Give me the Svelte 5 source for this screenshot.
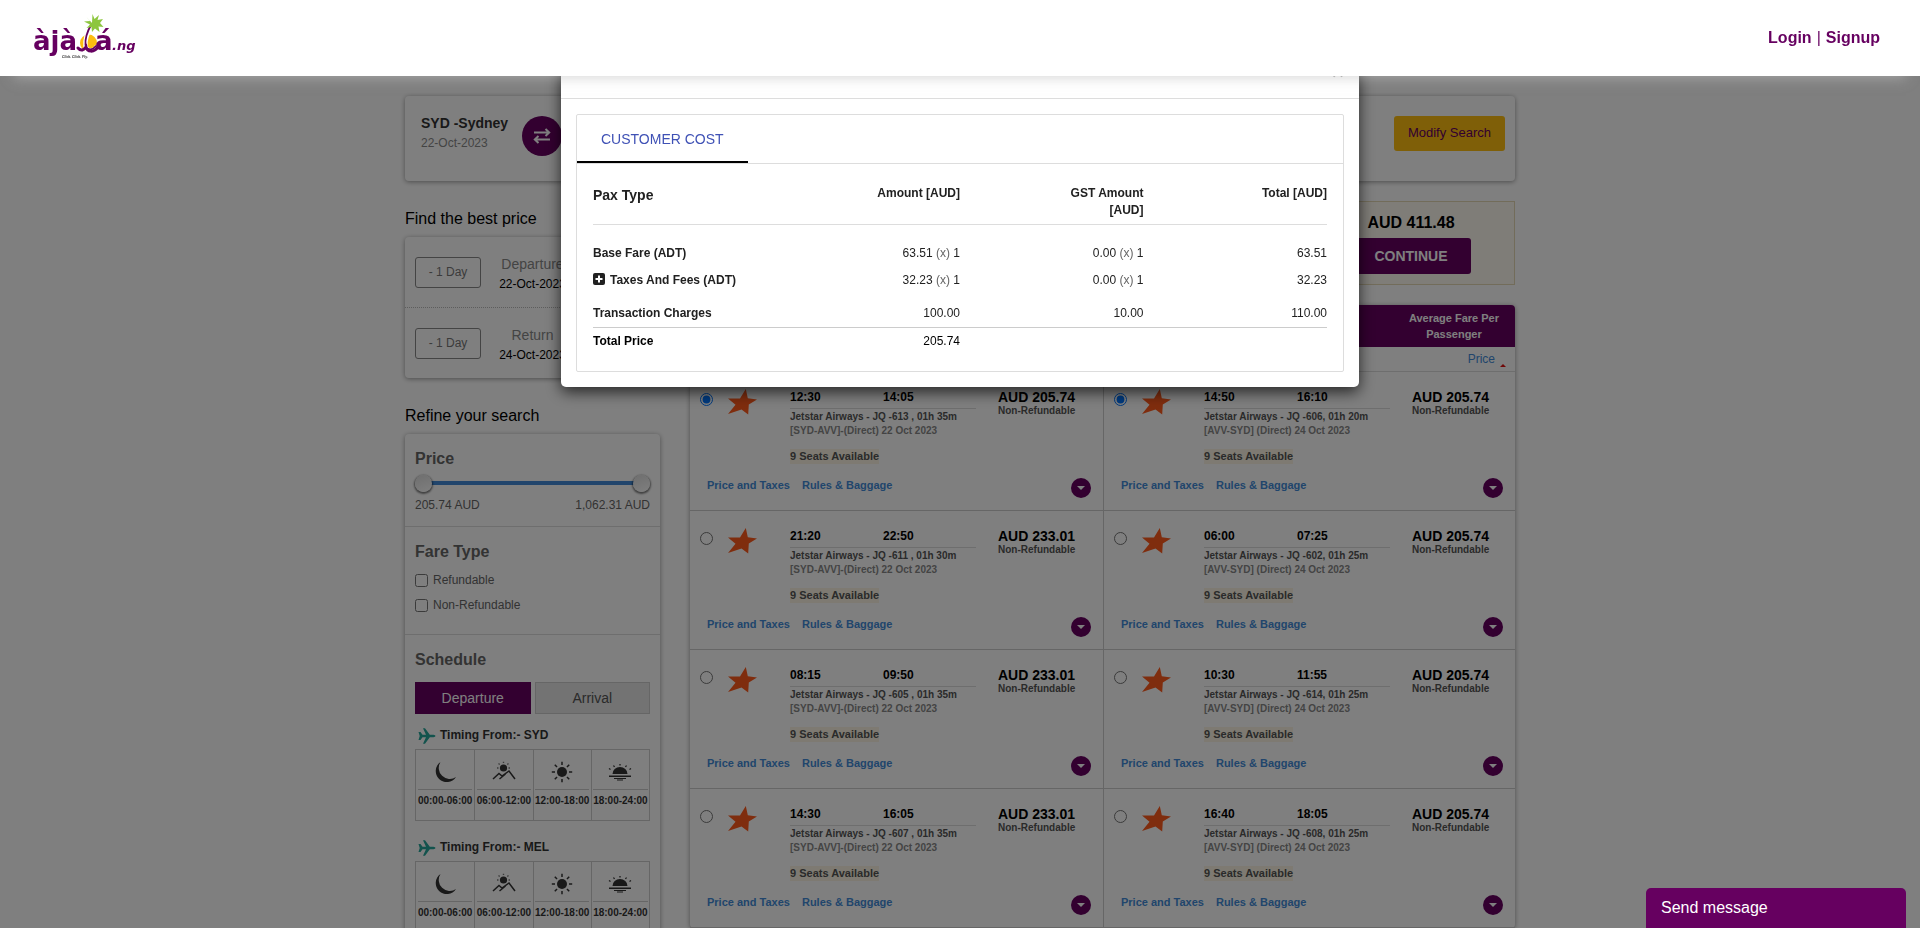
<script>
  const out = [
    { dep: '12:30', arr: '14:05', flight: 'JQ -613 , 01h 35m', price: '205.74' },
    { dep: '21:20', arr: '22:50', flight: 'JQ -611 , 01h 30m', price: '233.01' },
    { dep: '08:15', arr: '09:50', flight: 'JQ -605 , 01h 35m', price: '233.01' },
    { dep: '14:30', arr: '16:05', flight: 'JQ -607 , 01h 35m', price: '233.01' }
  ];
  const back = [
    { dep: '14:50', arr: '16:10', flight: 'JQ -606, 01h 20m', price: '205.74' },
    { dep: '06:00', arr: '07:25', flight: 'JQ -602, 01h 25m', price: '205.74' },
    { dep: '10:30', arr: '11:55', flight: 'JQ -614, 01h 25m', price: '205.74' },
    { dep: '16:40', arr: '18:05', flight: 'JQ -608, 01h 25m', price: '205.74' }
  ];
  const legs = [
    { id: 'outbound', route: '[SYD-AVV]-(Direct) 22 Oct 2023', flights: out },
    { id: 'inbound', route: '[AVV-SYD] (Direct) 24 Oct 2023', flights: back }
  ];
  const shifts = [
    { label: 'Departure', date: '22-Oct-2023' },
    { label: 'Return', date: '24-Oct-2023' }
  ];
  const slots = ['00:00-06:00', '06:00-12:00', '12:00-18:00', '18:00-24:00'];
  const rays = [0, 45, 90, 135, 180, 225, 270, 315];
  let chosen = $state({ outbound: 0, inbound: 0 });
  let tab = $state('Departure');
  let low = $state(205.74);
  let high = $state(1062.31);
</script>

<header class="top">
  <a class="logo" href="#home" aria-label="ajala.ng">
    <svg width="110" height="56" viewBox="0 0 110 56">
      <circle cx="56.500" cy="33" r="8.500" fill="#fdbd10" />
      <path d="M59 17C54.500 24 53 31 53.500 36C54 42 62 42 65 36" fill="none" stroke="#fff" stroke-width="4.500" />
      <path d="M59.500 14C55 22 53 30 53.500 35C54 40 60 41 64 36" fill="none" stroke="#660060" stroke-width="1.800" stroke-linecap="round" />
      <path d="M46 38C49 41.500 52 40 54 37C55 42 62 43 66 37" fill="none" stroke="#660060" stroke-width="3" stroke-linecap="round" />
      <path d="M60 13L60.500 4L62.500 9L67 5L65.500 10L71 9L68 13L71.500 17L66.500 16.500L67.500 22L63 18.500L60 22L59.500 17L54.500 18L58 14.500L52 11.500L58 11L54 6.500Z" fill="#8dc63f" />
      <text x="1" y="40" class="mark">àjà</text>
      <text x="63" y="40" class="mark">á</text>
      <text x="80" y="40" class="suffix">.ng</text>
      <text x="30" y="48" class="tagline">Click. Click. Fly.</text>
    </svg>
  </a>
  <nav class="account"><a href="#login">Login</a><span>|</span><a href="#signup">Signup</a></nav>
</header>

<main class="page">
  <section class="card search">
    <div class="from">
      <strong>SYD -Sydney</strong>
      <span>22-Oct-2023</span>
    </div>
    <button class="swap" aria-label="Swap">
      <svg width="18" height="16" viewBox="0 0 18 16" fill="none" stroke="#fff" stroke-width="2">
        <path d="M1 4.500H16M12.500 1L16.200 4.500L12.500 8M17 11.500H2M5.500 8L1.800 11.500L5.500 15" />
      </svg>
    </button>
    <button class="modify">Modify Search</button>
  </section>

  <div class="columns">
    <aside>
      <h2>Find the best price</h2>
      <div class="card">
        {#each shifts as s}
          <div class="shift">
            <button>- 1 Day</button>
            <div><span>{s.label}</span>{s.date}</div>
          </div>
        {/each}
      </div>

      <h2 class="second">Refine your search</h2>
      <div class="card">
        <section class="filter">
          <h3>Price</h3>
          <div class="range">
            <div class="track"></div>
            <input type="range" aria-label="Lowest price" min="205.74" max="1062.31" step="0.01" bind:value={low} />
            <input type="range" aria-label="Highest price" min="205.74" max="1062.31" step="0.01" bind:value={high} />
          </div>
          <div class="limits"><span>205.74 AUD</span><span>1,062.31 AUD</span></div>
        </section>
        <section class="filter fare">
          <h3>Fare Type</h3>
          <label><input type="checkbox" />Refundable</label>
          <label><input type="checkbox" />Non-Refundable</label>
        </section>
        <section class="filter schedule">
          <h3>Schedule</h3>
          <div class="tabs">
            {#each ['Departure', 'Arrival'] as t}
              <button class:on={tab === t} onclick={() => (tab = t)}>{t}</button>
            {/each}
          </div>
          {#each ['SYD', 'MEL'] as city}
            <h4>
              <svg width="18" height="16" viewBox="0 0 18 16">
                <path d="M.5 4H2.500L4.500 6.800H8L5 .3H7L11.800 6.800H15.500Q17.500 7 17.500 8Q17.500 9 15.500 9.200H11.800L7 15.700H5L8 9.200H4.500L2.500 12H.5L1.700 8Z" fill="#26a69a" />
              </svg>
              Timing From:- {city}
            </h4>
            <div class="slots">
              {#each slots as slot, i}
                <button>
                  <svg width="24" height="24" viewBox="0 0 24 24" fill="#333" stroke="none">
                    {#if i === 0}
                      <path d="M7.500 2A11 11 0 1 0 23 17A11 11 0 0 1 7.500 2Z" />
                    {:else if i === 1}
                      <circle cx="11.500" cy="8" r="3.600" />
                      <g stroke="#777" stroke-width="1.400">
                        <path d="M5 8H6.500M16.500 8H18M6.500 3.500L7.700 4.500M16.500 3.500L15.300 4.500M11.500 1.800V3" />
                      </g>
                      <path d="M1 19L7 13.500L10 16L17 11L23 19M7.500 19L13.500 14" fill="none" stroke="#333" stroke-width="1.500" />
                    {:else if i === 2}
                      <circle cx="12" cy="12" r="5" />
                      {#each rays as r}
                        <path d="M12 1.800V5" stroke="#333" stroke-width="1.500" transform="rotate({r} 12 12)" />
                      {/each}
                    {:else}
                      <path d="M4.500 14A7.500 7 0 0 1 19.500 14ZM1 15.500H23V17H1ZM6 18H18V19H6ZM9 19.500H15V20.500H9Z" />
                      <path d="M1 8.500L2.500 9.500M5.500 5.500L6.500 7M12 4V5.500M18.500 5.500L17.500 7M23 8.500L21.500 9.500" stroke="#333" stroke-width="1.300" />
                    {/if}
                  </svg>
                  <span>{slot}</span>
                </button>
              {/each}
            </div>
          {/each}
        </section>
      </div>
    </aside>

    <div class="results">
      <section class="total">
        <div>
          <strong>AUD 411.48</strong>
          <button>CONTINUE</button>
        </div>
      </section>

      <section class="card list">
        <div class="bar"><span>Average Fare Per<br />Passenger</span></div>
        <div class="sort"><a href="#price">Price</a><i></i></div>
        <div class="legs">
          {#each legs as leg}
            <div class="leg">
              {#each leg.flights as f, i}
                <article>
                  <input type="radio" name={leg.id} value={i} bind:group={chosen[leg.id]} aria-label="{f.dep} to {f.arr}" />
                  <svg class="star" width="29" height="26" viewBox="0 0 29 26">
                    <path d="M17.800 0L19.800 9.300L29 10.500L20.800 15.500L20.200 25.500L13.500 20.500L0 25L7.500 15.800L0 9.500L12 9.500Z" fill="#ff5a1c" />
                  </svg>
                  <div class="info">
                    <div class="times"><b>{f.dep}</b><b>{f.arr}</b></div>
                    <p>Jetstar Airways - {f.flight}</p>
                    <p class="route">{leg.route}</p>
                    <mark>9 Seats Available</mark>
                  </div>
                  <div class="fare-box"><b>AUD {f.price}</b><span>Non-Refundable</span></div>
                  <footer>
                    <a href="#taxes">Price and Taxes</a>
                    <a href="#rules">Rules &amp; Baggage</a>
                    <button aria-label="More details">
                      <svg width="8" height="4" viewBox="0 0 8 4"><path d="M0 0H8L4 4Z" fill="#fff" /></svg>
                    </button>
                  </footer>
                </article>
              {/each}
            </div>
          {/each}
        </div>
      </section>
    </div>
  </div>
</main>

<div class="backdrop">
  <div class="modal" role="dialog" aria-label="Customer cost">
    <div class="modal-head"><button aria-label="Close">×</button></div>
    <div class="modal-body">
      <div class="panel">
        <div class="panel-tabs"><button>CUSTOMER COST</button></div>
        <table>
          <thead>
            <tr><th>Pax Type</th><th>Amount [AUD]</th><th>GST Amount<br />[AUD]</th><th>Total [AUD]</th></tr>
          </thead>
          <tbody>
            <tr class="base"><th>Base Fare (ADT)</th><td>63.51 <i>(x)</i> 1</td><td>0.00 <i>(x)</i> 1</td><td>63.51</td></tr>
            <tr class="taxes">
              <th>
                <svg width="12" height="12" viewBox="0 0 12 12">
                  <rect width="12" height="12" rx="2" fill="#212121" />
                  <path d="M6 2.500V9.500M2.500 6H9.500" stroke="#fff" stroke-width="2" />
                </svg>Taxes And Fees (ADT)
              </th>
              <td>32.23 <i>(x)</i> 1</td><td>0.00 <i>(x)</i> 1</td><td>32.23</td>
            </tr>
            <tr class="charges"><th>Transaction Charges</th><td>100.00</td><td>10.00</td><td>110.00</td></tr>
            <tr class="sum"><th>Total Price</th><td>205.74</td><td></td><td></td></tr>
          </tbody>
        </table>
      </div>
    </div>
  </div>
</div>

<button class="chat">Send message</button>

<style>
  :global(body) {
    font-family: "Liberation Sans", Arial, sans-serif;
    font-size: 12px;
    overflow: hidden;
    background: #fff;
  }
  :global(#app) { height: 100vh; overflow: hidden; }
  * { box-sizing: border-box; }
  button { font: inherit; padding: 0; border: 0; background: none; cursor: pointer; }
  a { text-decoration: none; }
  h2, h3, h4, p { margin: 0; }

  .top {
    position: relative;
    z-index: 3;
    height: 76px;
    padding: 0 40px 0 32px;
    display: flex;
    align-items: center;
    justify-content: space-between;
    background: #fff;
    box-shadow: 0 16px 12px -14px rgba(190, 190, 190, 0.6);
  }
  .logo { height: 56px; }
  .mark { font: 700 26px "DejaVu Sans", sans-serif; fill: #660060; }
  .suffix { font: italic 700 13px "DejaVu Sans", sans-serif; fill: #660060; }
  .tagline { font: italic 700 4px Lato, sans-serif; fill: #333; }
  .account { display: flex; gap: 5px; font-size: 16px; line-height: 20px; color: #660060; }
  .account a { color: #660060; font-weight: bold; }

  .page { max-width: 1110px; margin: 0 auto; padding-top: 20px; }
  .card { background: #fff; border-radius: 4px; box-shadow: 0 1px 5px rgba(0, 0, 0, 0.4); }
  .search { display: flex; align-items: flex-start; height: 85px; padding: 17px 10px 0 16px; }
  .from { width: 101px; line-height: 20px; color: #888; }
  .from strong { display: block; font-size: 14px; color: #333; }
  .swap {
    display: grid;
    place-items: center;
    width: 40px;
    height: 40px;
    margin-top: 3px;
    border-radius: 50%;
    background: #660060;
  }
  .modify {
    margin: 3px 0 0 auto;
    padding: 0 14px 2px;
    height: 35px;
    border-radius: 3px;
    background: #ffbf10;
    color: #660060;
    font-size: 13px;
  }

  .columns { display: grid; grid-template-columns: 255px 1fr; gap: 30px; margin-top: 20px; }
  aside { padding-top: 5px; }
  h2 { font-size: 16px; font-weight: normal; line-height: 26px; margin-bottom: 5px; }
  .second { margin-top: 25px; }
  .shift {
    display: grid;
    grid-template-columns: 66px 1fr 66px;
    align-items: center;
    height: 70px;
    padding: 0 10px;
    text-align: center;
    line-height: 20px;
  }
  .shift + .shift { height: 71px; border-top: 1px dotted #bbb; }
  .shift > div { padding-top: 4px; }
  .shift span { display: block; font-size: 14px; color: #888; }
  .shift button { height: 31px; border: 1px solid #888; border-radius: 3px; color: #777; }

  .filter { padding: 14px 10px 13px; border-bottom: 1px solid #ddd; color: #666; }
  h3 { font-size: 16px; line-height: 22px; color: #666; }
  .range { display: grid; align-items: center; margin: 4px 0 5px; height: 18px; }
  .range > * { grid-area: 1 / 1; }
  .track { height: 4px; margin: 0 8px; background: #428bd8; }
  .range input { appearance: none; width: 100%; height: 17px; margin: 0; background: none; pointer-events: none; }
  .range input::-webkit-slider-thumb {
    appearance: none;
    width: 17px;
    height: 17px;
    border-radius: 50%;
    background: linear-gradient(160deg, #ddd, #fff);
    box-shadow: 0 1px 2px 1px rgba(0, 0, 0, 0.5);
    pointer-events: auto;
  }
  .limits { display: flex; justify-content: space-between; line-height: 16px; }
  .fare { padding-bottom: 19px; }
  .fare h3 { margin-bottom: 7px; }
  .fare label { display: flex; align-items: center; gap: 5px; line-height: 20px; }
  .fare label + label { margin-top: 5px; }
  .fare input { width: 13px; height: 13px; margin: 0; }
  .tabs { display: grid; grid-template-columns: 1fr 1fr; gap: 4px; margin: 11px 0 12px; }
  .tabs button { height: 32px; border: 1px solid #ccc; background: #e6e6e6; color: #555; font-size: 14px; }
  .tabs .on { background: #660060; border-color: #660060; color: #fff; }
  h4 { display: flex; align-items: center; gap: 4px; padding-left: 3px; font-size: 12px; line-height: 16px; color: #333; }
  h4 svg { margin-top: 2px; }
  .slots { display: grid; grid-template-columns: repeat(4, 1fr); margin: 5px 0 17px; border: 1px solid #ccc; height: 72px; }
  .slots button {
    display: flex;
    flex-direction: column;
    align-items: center;
    min-width: 0;
    padding-top: 10px;
    font-size: 10px;
    font-weight: bold;
    color: #333;
  }
  .slots button + button { border-left: 1px solid #ccc; }
  .slots span { margin-top: 5px; border-top: 1px solid #ccc; line-height: 22px; }

  .total {
    display: flex;
    justify-content: flex-end;
    height: 84px;
    padding: 10px 43px 0;
    border: 1px solid #e5d9b5;
    background: #fffaf0;
    text-align: center;
  }
  .total strong { display: block; font-size: 16px; line-height: 22px; }
  .total button {
    width: 120px;
    height: 36px;
    margin-top: 4px;
    border-radius: 3px;
    background: #660060;
    color: #fff;
    font-size: 14px;
    font-weight: bold;
  }
  .list { margin-top: 20px; }
  .bar {
    display: flex;
    justify-content: flex-end;
    padding: 5px 16px;
    border-radius: 4px 4px 0 0;
    background: #660060;
    color: #fff;
    font-size: 11px;
    font-weight: bold;
    line-height: 16px;
    text-align: center;
  }
  .sort { display: flex; justify-content: flex-end; height: 25px; padding-right: 9px; border-bottom: 1px solid #ddd; line-height: 24px; }
  .sort a { color: #428bd8; }
  .sort i { margin: 17px 0 0 5px; width: 0; height: 0; border: 3px solid transparent; border-top: 0; border-bottom-color: #e01010; }
  .legs { display: grid; grid-template-columns: 413fr 412fr; }
  .leg + .leg { border-left: 1px solid #ccc; }
  article {
    display: grid;
    grid-template-columns: 38px 62px 208px 1fr;
    align-items: start;
    padding: 17px 0;
    border-bottom: 1px solid #ccc;
  }
  article > input { width: 13px; height: 13px; margin: 4px 0 0 10px; }
  .times { display: grid; grid-template-columns: 93px 93px; width: 186px; padding-bottom: 3px; border-bottom: 1px solid #ddd; margin-bottom: 1px; font-size: 12px; line-height: 16px; }
  article p { font-size: 10px; font-weight: bold; line-height: 14px; color: #555; white-space: nowrap; }
  article .route { color: #888; margin-bottom: 11px; }
  mark { display: block; width: fit-content; background: #fcf5e4; color: #555; font-size: 11px; font-weight: bold; line-height: 15px; }
  .fare-box b { display: block; font-size: 14px; line-height: 16px; }
  .fare-box span { display: block; font-size: 10px; font-weight: bold; line-height: 12px; color: #555; }
  footer { grid-column: 1 / -1; display: flex; align-items: center; gap: 12px; height: 16px; margin-top: 13px; padding: 0 12px 0 17px; font-size: 11px; font-weight: bold; }
  footer a { color: #428bd8; }
  footer button { display: grid; place-items: center; width: 20px; height: 20px; margin: 6px 0 0 auto; border-radius: 50%; background: #660060; }

  .backdrop { position: fixed; inset: 0; z-index: 2; padding-top: 28px; background: rgba(0, 0, 0, 0.5); }
  .modal { max-width: 798px; margin: 0 auto; border-radius: 5px; background: #fff; box-shadow: 0 5px 15px rgba(0, 0, 0, 0.7); }
  .modal-head { display: flex; justify-content: flex-end; align-items: flex-end; height: 71px; padding: 0 15px 14px; border-bottom: 1px solid #ddd; }
  .modal-head button { font-size: 21px; font-weight: bold; line-height: 24px; color: #aaa; }
  .modal-body { padding: 15px; }
  .panel { border: 1px solid #ddd; border-radius: 2px; padding-bottom: 21px; }
  .panel-tabs { display: flex; height: 49px; border-bottom: 1px solid #ddd; }
  .panel-tabs button { padding: 2px 24px 0; border-bottom: 2px solid #000; color: #3f51b5; font-size: 14px; }
  table { width: calc(100% - 32px); margin: 0 16px; border-spacing: 0; table-layout: fixed; line-height: 17px; color: #212121; }
  th, td { padding: 0; text-align: right; }
  th:first-child { text-align: left; white-space: nowrap; }
  thead th { padding: 21px 0 5px; border-bottom: 1px solid #ddd; vertical-align: top; }
  thead th:first-child { padding-top: 23px; font-size: 14px; }
  td i { font-style: normal; color: #666; }
  .base > * { padding: 20px 0 5px; }
  .taxes > * { padding-top: 5px; }
  .taxes svg { margin-right: 5px; vertical-align: -1px; }
  .charges > * { padding: 16px 0 5px; border-bottom: 1px solid #ccc; }
  .sum > * { padding-top: 5px; color: #000; }

  .chat {
    position: fixed;
    right: 14px;
    bottom: 0;
    z-index: 4;
    width: 260px;
    height: 40px;
    padding: 0 15px;
    border-radius: 5px 5px 0 0;
    background: #660060;
    color: #fff;
    font-size: 16px;
    text-align: left;
  }
</style>
